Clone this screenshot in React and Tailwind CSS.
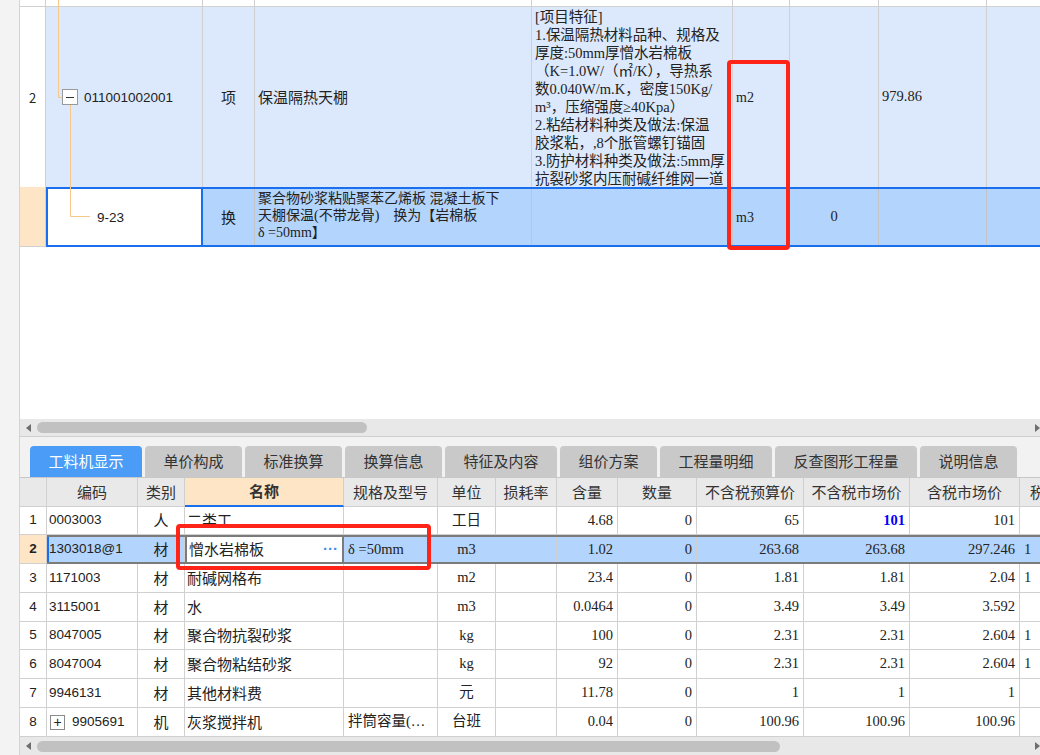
import clsx from "clsx"

const serif = "font-['Liberation_Serif','Noto_Sans_CJK_SC',serif]"
const sans = "font-['Liberation_Sans','Noto_Sans_CJK_SC',sans-serif]"

// top grid column widths
const TOP = ["w-[26px]", "w-[157px]", "w-[52px]", "w-[277px]", "w-[201px]", "w-[57px]", "w-[89px]", "w-[108px]", "w-[80px]"]

// bottom grid column widths
const BOT = ["w-[27px]", "w-[91px]", "w-[47px]", "w-[159px]", "w-[94px]", "w-[58px]", "w-[61px]", "w-[61px]", "w-[79px]", "w-[107px]", "w-[106px]", "w-[110px]", "w-[80px]"]

const FEATURES = [
    "[项目特征]",
    "1.保温隔热材料品种、规格及",
    "厚度:50mm厚憎水岩棉板",
    "（K=1.0W/（㎡/K），导热系",
    "数0.040W/m.K，密度150Kg/",
    "m³，压缩强度≥40Kpa）",
    "2.粘结材料种类及做法:保温",
    "胶浆粘，,8个胀管螺钉锚固",
    "3.防护材料种类及做法:5mm厚",
    "抗裂砂浆内压耐碱纤维网一道",
]

const TABS = [
    { label: "工料机显示", w: "w-[112px]", active: true },
    { label: "单价构成", w: "w-[97px]" },
    { label: "标准换算", w: "w-[97px]" },
    { label: "换算信息", w: "w-[97px]" },
    { label: "特征及内容", w: "w-[112px]" },
    { label: "组价方案", w: "w-[97px]" },
    { label: "工程量明细", w: "w-[112px]" },
    { label: "反查图形工程量", w: "w-[142px]" },
    { label: "说明信息", w: "w-[97px]" },
]

const HEAD = ["", "编码", "类别", "名称", "规格及型号", "单位", "损耗率", "含量", "数量", "不含税预算价", "不含税市场价", "含税市场价", "税率"]

const ROWS = [
    { n: "1", code: "0003003", type: "人", name: "二类工", spec: "", unit: "工日", qty: "4.68", num: "0", p1: "65", p2: "101", p3: "101", tax: "", h: "h-[28px]", blue: true },
    { n: "2", code: "1303018@1", type: "材", name: "憎水岩棉板", spec: "δ =50mm", unit: "m3", qty: "1.02", num: "0", p1: "263.68", p2: "263.68", p3: "297.246", tax: "1", h: "h-[29px]", sel: true },
    { n: "3", code: "1171003", type: "材", name: "耐碱网格布", spec: "", unit: "m2", qty: "23.4", num: "0", p1: "1.81", p2: "1.81", p3: "2.04", tax: "1", h: "h-[29px]" },
    { n: "4", code: "3115001", type: "材", name: "水", spec: "", unit: "m3", qty: "0.0464", num: "0", p1: "3.49", p2: "3.49", p3: "3.592", tax: "", h: "h-[29px]" },
    { n: "5", code: "8047005", type: "材", name: "聚合物抗裂砂浆", spec: "", unit: "kg", qty: "100", num: "0", p1: "2.31", p2: "2.31", p3: "2.604", tax: "1", h: "h-[28px]" },
    { n: "6", code: "8047004", type: "材", name: "聚合物粘结砂浆", spec: "", unit: "kg", qty: "92", num: "0", p1: "2.31", p2: "2.31", p3: "2.604", tax: "1", h: "h-[29px]" },
    { n: "7", code: "9946131", type: "材", name: "其他材料费", spec: "", unit: "元", qty: "11.78", num: "0", p1: "1", p2: "1", p3: "1", tax: "", h: "h-[29px]" },
    { n: "8", code: "9905691", type: "机", name: "灰浆搅拌机", spec: "拌筒容量(…", unit: "台班", qty: "0.04", num: "0", p1: "100.96", p2: "100.96", p3: "100.96", tax: "", h: "h-[29px]", plus: true },
]

function Scrollbar({ h, thumb }) {
    return (
        <div className={clsx("relative shrink-0 bg-[#e8e8e8] flex items-center", h)}>
            <div className="w-0 h-0 ml-[6px] border-y-[4px] border-y-transparent border-r-[5px] border-r-[#6e6e6e]" />
            <div className={clsx("ml-[6px] h-[11px] rounded-full bg-[#c1c1c1]", thumb)} />
            <div className="absolute right-[0px] w-0 h-0 border-y-[4px] border-y-transparent border-l-[5px] border-l-[#6e6e6e]" />
        </div>
    )
}

function App() {

    return (

        <div className="relative w-[1040px] h-[755px] overflow-hidden bg-white flex text-[#222] font-['Noto_Sans_CJK_SC',sans-serif]">

            {/* LEFT GUTTER */}

            <div className="w-[20px] shrink-0 bg-[#f3f3f3] border-r border-[#d4d4d4]" />

            <div className="flex-1 min-w-0 flex flex-col overflow-hidden">

                {/* TOP GRID */}

                <div className="relative h-[247px] shrink-0">

                    <div className="flex h-[7px] border-b border-[#d0d0d0]">
                        {TOP.map((w, i) => (
                            <div key={i} className={clsx(w, "shrink-0 border-r border-[#d0d0d0]")} />
                        ))}
                    </div>

                    <div className="flex h-[180px] bg-[#dce9fc]">

                        <div className="w-[26px] shrink-0 bg-white border-r border-[#d0d0d0] flex items-center justify-center text-[13px] pt-[2px]">
                            2
                        </div>

                        <div className={clsx("w-[157px] shrink-0 border-r border-[#d0d0d0] flex items-center pl-[38px] text-[13.5px] pt-[2px]", sans)}>
                            011001002001
                        </div>

                        <div className="w-[52px] shrink-0 border-r border-[#d0d0d0] flex items-center justify-center text-[15px]">
                            项
                        </div>

                        <div className="w-[277px] shrink-0 border-r border-[#d0d0d0] flex items-center pl-[3px] text-[15px]">
                            保温隔热天棚
                        </div>

                        <div className={clsx("w-[201px] shrink-0 border-r border-[#d0d0d0] pl-[3px] pt-[1px] text-[14.5px] leading-[18px] overflow-hidden", serif)}>
                            {FEATURES.map((line, i) => (
                                <div key={i} className="whitespace-nowrap">{line}</div>
                            ))}
                        </div>

                        <div className={clsx("w-[57px] shrink-0 border-r border-[#d0d0d0] flex items-center pl-[3px] text-[14px]", serif)}>
                            m2
                        </div>

                        <div className="w-[89px] shrink-0 border-r border-[#d0d0d0]" />

                        <div className={clsx("w-[108px] shrink-0 border-r border-[#d0d0d0] flex items-center pl-[3px] text-[14.5px]", serif)}>
                            979.86
                        </div>

                        <div className="w-[80px] shrink-0" />

                    </div>

                    {/* selected row */}

                    <div className="flex h-[60px]">

                        <div className="w-[26px] shrink-0 bg-[#fde5c6] border-r border-[#d0d0d0] border-b" />

                        <div className="flex flex-1 min-w-0 border-y-2 border-[#1a6fef] bg-[#b3d4fc] overflow-hidden">

                            <div className={clsx("w-[157px] shrink-0 bg-white border-x-2 border-[#1a6fef] flex items-center pl-[49px] text-[13.5px] pt-[2px]", sans)}>
                                9-23
                            </div>

                            <div className="w-[52px] shrink-0 border-r border-[#c4c4c4] flex items-center justify-center text-[15px]">
                                换
                            </div>

                            <div className={clsx("w-[277px] shrink-0 border-r border-[#c4c4c4] pl-[3px] pt-[1px] text-[14px] leading-[17px]", serif)}>
                                <div className="whitespace-nowrap">聚合物砂浆粘贴聚苯乙烯板 混凝土板下</div>
                                <div className="whitespace-nowrap">天棚保温(不带龙骨)　换为【岩棉板</div>
                                <div className="whitespace-nowrap">δ =50mm】</div>
                            </div>

                            <div className="w-[201px] shrink-0 border-r border-[#c4c4c4]" />

                            <div className={clsx("w-[57px] shrink-0 border-r border-[#c4c4c4] flex items-center pl-[3px] text-[14px]", serif)}>
                                m3
                            </div>

                            <div className={clsx("w-[89px] shrink-0 border-r border-[#c4c4c4] flex items-center justify-center text-[14.5px]", serif)}>
                                0
                            </div>

                            <div className="w-[108px] shrink-0 border-r border-[#c4c4c4]" />

                            <div className="w-[80px] shrink-0" />

                        </div>

                    </div>

                    {/* tree lines */}

                    <svg className="absolute left-0 top-0 pointer-events-none" width="120" height="247">
                        <path d="M38.5 0 V97.5 H42" stroke="#f8c88a" fill="none" />
                        <path d="M50.5 105 V216.5 H70" stroke="#f8c88a" fill="none" />
                        <rect x="42.5" y="89.5" width="15" height="15" fill="white" stroke="#9a9a9a" />
                        <path d="M46 97.5 H54" stroke="#333" />
                    </svg>

                </div>

                {/* EMPTY AREA */}

                <div className="flex-1 bg-white" />

                <Scrollbar h="h-[17px]" thumb="w-[330px]" />

                {/* TABS */}

                <div className="h-[41px] shrink-0 bg-[#f2f2f2] border-t border-[#cfcfcf] flex items-end gap-[3px] pl-[10px]">
                    {TABS.map((t) => (
                        <div
                            key={t.label}
                            className={clsx(
                                t.w,
                                "shrink-0 h-[31px] rounded-t-[4px] flex items-center justify-center text-[15px] pb-[1px]",
                                t.active ? "bg-[#4a9cf6] text-white" : "bg-[#c9c9c9] text-[#333]"
                            )}
                        >
                            {t.label}
                        </div>
                    ))}
                </div>

                {/* BOTTOM GRID */}

                <div className="shrink-0 border-t border-[#c8c8c8]">

                    <div className="flex h-[29px] bg-[#e9e9e9]">
                        {HEAD.map((h, i) => (
                            <div
                                key={i}
                                className={clsx(
                                    BOT[i],
                                    "shrink-0 border-r border-b border-[#d0d0d0] flex items-center text-[15px] text-[#333] overflow-hidden whitespace-nowrap",
                                    i === 12 ? "pl-[10px]" : "justify-center",
                                    i === 3 && "bg-[#fde5c6] font-bold border-b-2 border-b-[#1a6fef]"
                                )}
                            >
                                {h}
                            </div>
                        ))}
                    </div>

                    {ROWS.map((r) => (
                        <div key={r.n} className={clsx("flex", r.h)}>

                            <div className={clsx(
                                "w-[27px] shrink-0 border-r border-b border-[#d0d0d0] flex items-center justify-center text-[13.5px]",
                                sans,
                                r.sel && "bg-[#fde5c6] font-bold"
                            )}>
                                {r.n}
                            </div>

                            <div className={clsx(
                                "flex flex-1 min-w-0 overflow-hidden",
                                r.sel ? "border-y-2 border-[#7b7b7b] bg-[#b3d4fc] relative" : "bg-white"
                            )}>

                                {r.sel && <div className="absolute left-0 top-0 bottom-0 w-[2px] bg-[#1a6fef]" />}

                                <div className={clsx("w-[91px] shrink-0 border-r border-[#d0d0d0] flex items-center pl-[2px] text-[13.5px] whitespace-nowrap", sans, !r.sel && "border-b")}>
                                    {r.plus && (
                                        <span className="w-[15px] h-[15px] mr-[7px] ml-[1px] border border-[#8a8a8a] flex items-center justify-center text-[14px] leading-none">+</span>
                                    )}
                                    {r.code}
                                </div>

                                <div className={clsx("w-[47px] shrink-0 border-r border-[#d0d0d0] flex items-center justify-center text-[15px]", !r.sel && "border-b")}>
                                    {r.type}
                                </div>

                                <div className={clsx(
                                    "w-[159px] shrink-0 flex items-center pl-[2px] text-[15px] whitespace-nowrap",
                                    r.sel ? "bg-white border-x-2 border-[#7b7b7b]" : "border-r border-b border-[#d0d0d0]"
                                )}>
                                    <span className="flex-1">{r.name}</span>
                                    {r.sel && <span className={clsx("text-[#3d8ef0] text-[15px] pr-[4px] font-bold", sans)}>···</span>}
                                </div>

                                <div className={clsx("w-[94px] shrink-0 border-r border-[#d0d0d0] flex items-center pl-[4px] text-[14.5px] whitespace-nowrap overflow-hidden", serif, !r.sel && "border-b")}>
                                    {r.spec}
                                </div>

                                <div className={clsx("w-[58px] shrink-0 border-r border-[#d0d0d0] flex items-center justify-center text-[14.5px]", serif, !r.sel && "border-b")}>
                                    {r.unit}
                                </div>

                                <div className={clsx("w-[61px] shrink-0 border-r border-[#d0d0d0]", !r.sel && "border-b")} />

                                {[
                                    ["w-[61px]", r.qty],
                                    ["w-[79px]", r.num],
                                    ["w-[107px]", r.p1],
                                    ["w-[106px]", r.p2],
                                    ["w-[110px]", r.p3],
                                ].map(([w, v], i) => (
                                    <div
                                        key={i}
                                        className={clsx(
                                            w,
                                            "shrink-0 border-r border-[#d0d0d0] flex items-center justify-end pr-[4px] text-[14.5px]",
                                            serif,
                                            !r.sel && "border-b",
                                            r.blue && i === 3 && "text-[#0000ff] font-bold"
                                        )}
                                    >
                                        {v}
                                    </div>
                                ))}

                                <div className={clsx("w-[80px] shrink-0 flex items-center pl-[4px] text-[14.5px]", serif, !r.sel && "border-b border-[#d0d0d0]")}>
                                    {r.tax}
                                </div>

                            </div>

                        </div>
                    ))}

                </div>

                <Scrollbar h="h-[18px]" thumb="w-[743px]" />

            </div>

            {/* RED MARKS */}

            <div className="absolute left-[727px] top-[60px] w-[63px] h-[190px] border-[4px] border-[#ff2318] rounded-[4px] pointer-events-none" />

            <div className="absolute left-[176px] top-[524px] w-[255px] h-[46px] border-[4px] border-[#ff2318] rounded-[4px] pointer-events-none" />

        </div>

    )

}

export default App
